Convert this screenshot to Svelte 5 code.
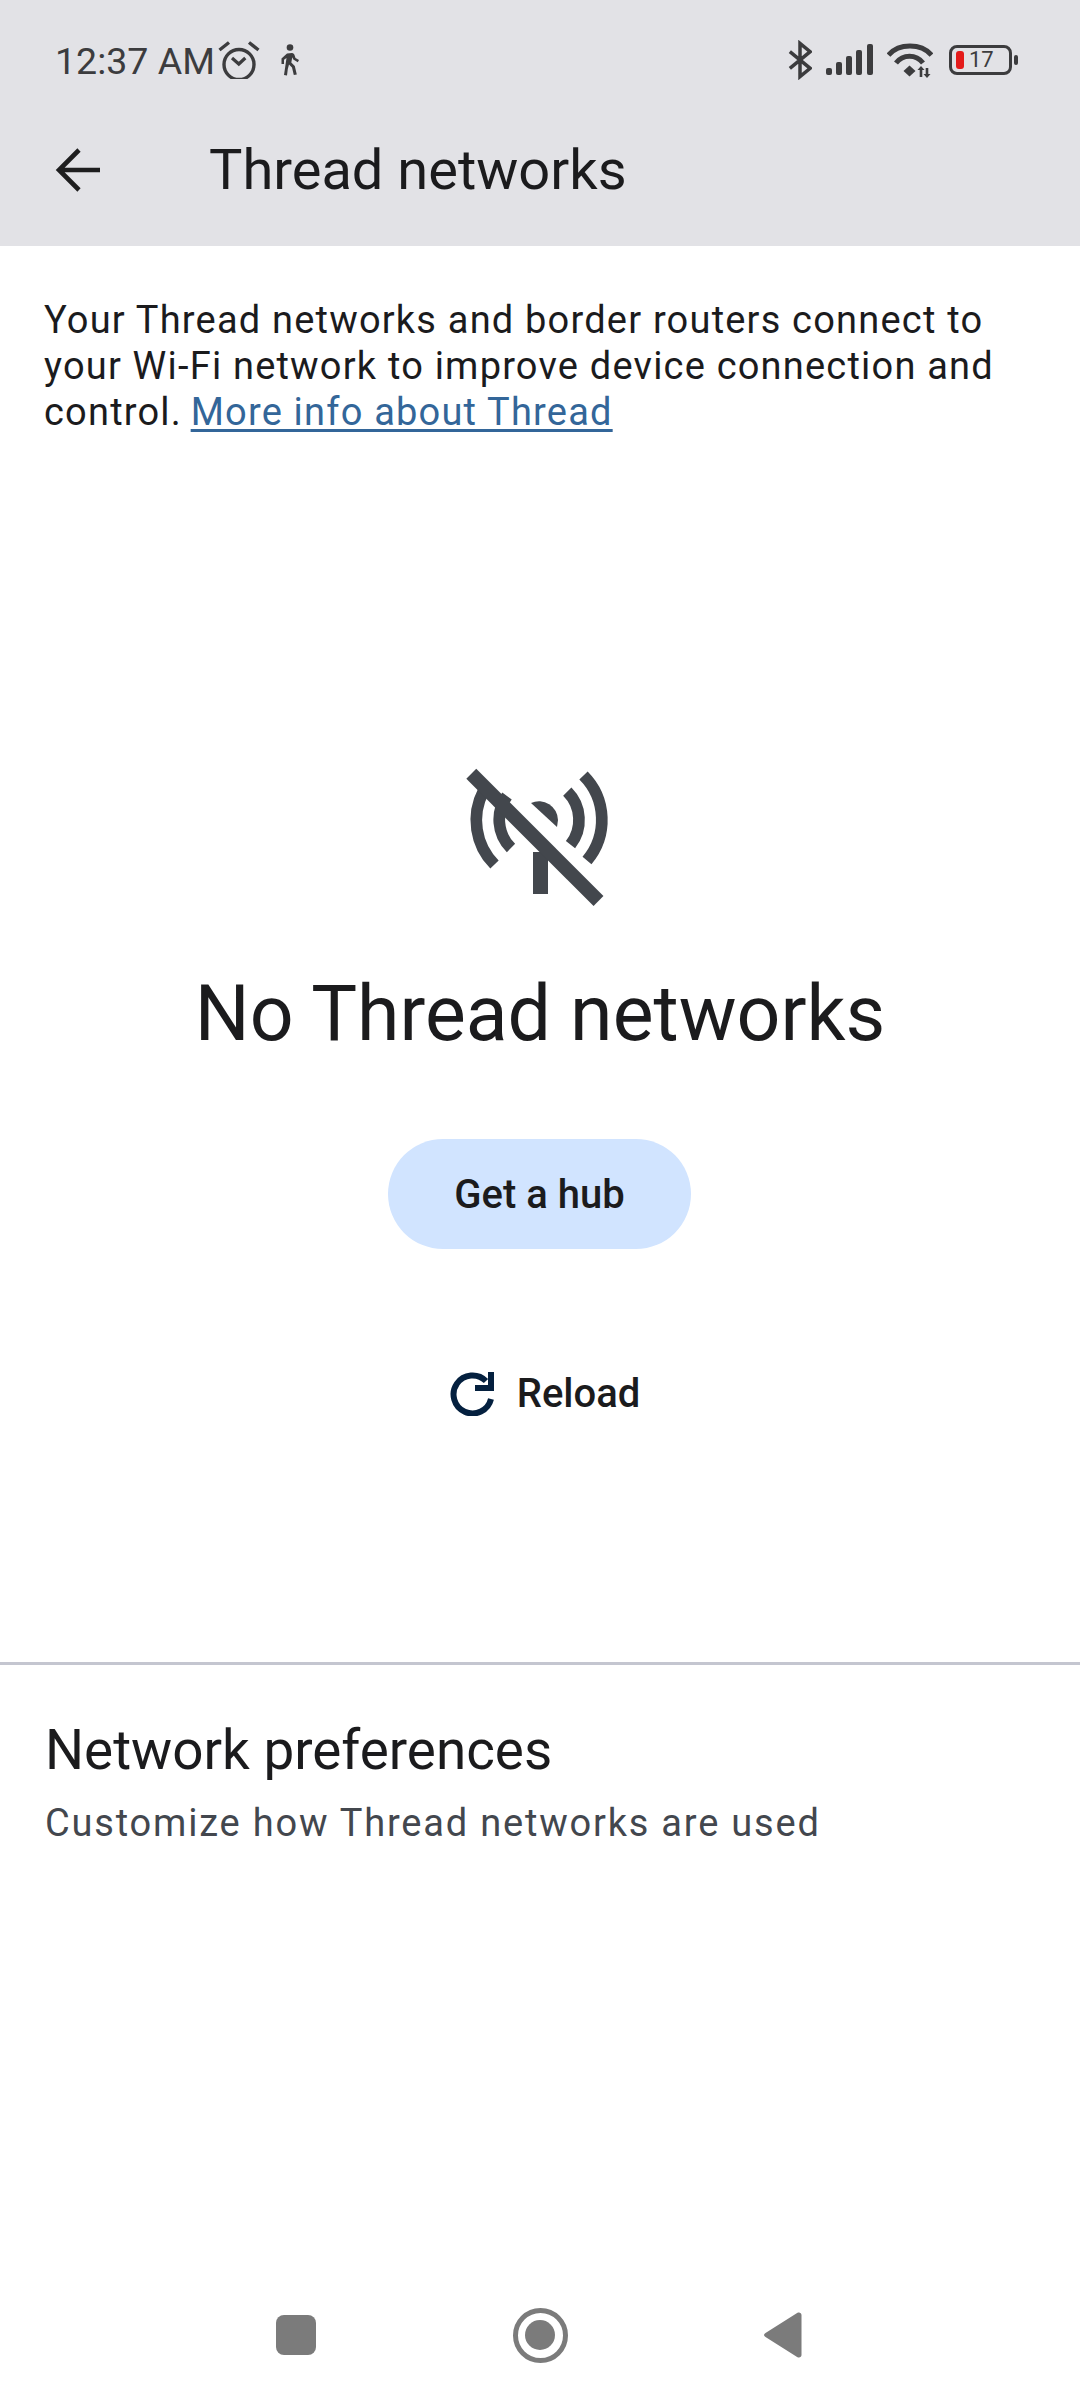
<script>
  const intro = 'Your Thread networks and border routers connect to your Wi-Fi network to improve device connection and control.';
</script>

<div class="page">
  <header class="appbar">
    <div class="status">
      <div class="status-left">
        <span class="time">12:37 AM</span>
        <svg class="alarm" width="42" height="38" viewBox="0 0 42 38" fill="none" stroke="#3c3c3e">
          <circle cx="21" cy="23.500" r="15" stroke-width="3.400" />
          <path d="M14 17 20.800 23l6.500-6" stroke-width="3.200" />
          <path d="M1.500 9 11 1.500M31 1.500 40.500 9" stroke-width="3.400" />
        </svg>
        <svg class="walk" width="20" height="32" viewBox="0 0 20 32" fill="#3c3c3e">
          <circle cx="10" cy="3.500" r="3.300" />
          <path d="M7 9.500 12 9c1.500 0 2 1 2.500 2l1 3 3.500 2-1.200 2.200-4.500-2.600-1-2.400-1 5.200 3.500 3.600 2 8.500-3 .5-1.800-7.500-3-3-1.200 4.500-.8 6.500-3-.5 1.200-8L6.500 14 4 15.800V20H1.500v-5.500z" />
        </svg>
      </div>
      <div class="status-right">
        <svg width="24" height="40" viewBox="0 0 26 40" fill="none" stroke="#3c3c3e" stroke-width="3.800">
          <path d="M2 11 24 29 13 38V2l11 9L2 29" />
        </svg>
        <svg class="signal" width="48" height="32" viewBox="0 0 48 32" fill="#3c3c3e">
          <rect x="0" y="24" width="6" height="7" rx="2" />
          <rect x="10" y="18" width="6" height="13" rx="2" />
          <rect x="20" y="12" width="6" height="19" rx="2" />
          <rect x="30" y="6" width="6" height="25" rx="2" />
          <rect x="41" y="0" width="6" height="31" rx="2" />
        </svg>
        <svg class="wifi" width="46" height="36" viewBox="0 0 46 36" fill="none" stroke="#3c3c3e" stroke-width="5">
          <path d="M1.500 13C12 1 34 1 44.500 13M9 21C16 12 29 12 36 21" />
          <path d="M16.500 29l6-5.500 6 5.500-6 5.500z" fill="#3c3c3e" stroke="none" />
          <path d="M34 27v8M40 26v8" stroke-width="2.600" />
          <path d="M34 24l-3.500 4h7zM40 36l3.500-4h-7z" fill="#3c3c3e" stroke="none" />
        </svg>
        <div class="battery">
          <div class="cell">
            <span class="level"></span>
            <span class="pct">17</span>
          </div>
          <span class="nub"></span>
        </div>
      </div>
    </div>
    <div class="toolbar">
      <svg class="back" width="46" height="44" viewBox="0 0 46 44" fill="none" stroke="#1e1e1f" stroke-width="4.600">
        <path d="M45 22H4M24 2 4 22l20 20" />
      </svg>
      <h1>Thread networks</h1>
    </div>
  </header>

  <main>
    <p class="intro">{intro} <a href="#thread">More info about Thread</a></p>

    <section class="empty">
      <svg class="no-signal" width="144" height="144" viewBox="0 0 144 144" fill="none">
        <g stroke="#43474d" stroke-width="11.700">
          <path d="M17.500 24A63 63 0 0 0 28.500 97.500" />
          <path d="M41 29A40 40 0 0 0 45 81" />
          <path d="M117.500 8.500A63 63 0 0 1 121 93.500" />
          <path d="M101.300 24.700A40 40 0 0 1 104.500 77.600" />
        </g>
        <path d="M65 36A19 19 0 0 1 92 53L91 60z" fill="#43474d" />
        <rect x="67" y="85" width="15" height="42" fill="#43474d" />
        <path d="M5.300 6.800 132.500 134" stroke="#43474d" stroke-width="14" />
      </svg>

      <h2>No Thread networks</h2>

      <button class="hub" type="button">Get a hub</button>

      <button class="reload" type="button">
        <svg width="44" height="44" viewBox="0 0 44 44" fill="none" stroke="#04203f" stroke-width="6">
          <path d="M41 27A19 19 0 1 1 36 9" />
          <path d="M41 0v16H25" />
        </svg>
        Reload
      </button>
    </section>

    <section class="prefs">
      <h3>Network preferences</h3>
      <p>Customize how Thread networks are used</p>
    </section>
  </main>

  <nav class="nav">
    <span class="square"></span>
    <span class="home"><span></span></span>
    <svg width="38" height="46" viewBox="0 0 38 46" fill="#7b7b7b">
      <path d="M33.500.8c2-1 4 .2 4 2.200v40c0 2-2 3.200-4 2.200L1.500 25c-2-1.200-2-2.800 0-4z" />
    </svg>
  </nav>
</div>

<style>
  :global(body) {
    margin: 0;
    background: #fff;
  }

  .page {
    width: 1080px;
    height: 2400px;
    display: flex;
    flex-direction: column;
    font-family: Roboto, sans-serif;
    color: #1b1b1d;
    overflow: hidden;
  }

  .appbar {
    height: 246px;
    flex: none;
    background: #e2e2e6;
  }

  .status {
    height: 120px;
    box-sizing: border-box;
    padding: 0 62px 0 55px;
    display: flex;
    justify-content: space-between;
    align-items: center;
  }

  .status-left,
  .status-right {
    display: flex;
    align-items: center;
  }

  .time {
    font-size: 37.5px;
    color: #3c3c3e;
    margin-top: 2px;
  }

  .alarm { margin-left: 3px; }
  .walk { margin-left: 20px; }

  .signal { margin-left: 14px; }
  .wifi { margin-left: 13px; }

  .battery {
    margin-left: 16px;
    display: flex;
    align-items: center;
    gap: 2px;
  }

  .cell {
    width: 63px;
    height: 30px;
    box-sizing: border-box;
    border: 3px solid #3c3c3e;
    border-radius: 8px;
    display: flex;
    align-items: center;
    padding-left: 4px;
    gap: 5px;
  }

  .level {
    width: 8px;
    height: 18px;
    border-radius: 3px;
    background: #e41b1b;
  }

  .pct {
    font-size: 22px;
    line-height: 24px;
    color: #3c3c3e;
  }

  .nub {
    width: 4px;
    height: 10px;
    border-radius: 2px;
    background: #3c3c3e;
  }

  .toolbar {
    height: 100px;
    padding-left: 55px;
    display: flex;
    align-items: center;
  }

  .back { flex: none; }

  h1 {
    margin: 0 0 0 108px;
    font-size: 56px;
    font-weight: 400;
  }

  main {
    flex: 1;
    display: flex;
    flex-direction: column;
  }

  .intro {
    margin: 0;
    padding: 51px 44px 0;
    font-size: 38px;
    line-height: 46px;
    letter-spacing: 1.2px;
  }

  .intro a {
    margin-left: -2px;
    color: #336699;
    text-decoration-thickness: 3px;
    text-underline-offset: 4px;
  }

  .empty {
    display: flex;
    flex-direction: column;
    align-items: center;
    padding-top: 332px;
    height: 1227px;
    box-sizing: border-box;
  }

  .no-signal { margin-left: -4px; }

  h2 {
    margin: 58px 0 0;
    font-size: 77px;
    font-weight: 400;
    line-height: 90px;
  }

  button {
    font-family: inherit;
    border: 0;
    background: none;
    color: inherit;
  }

  .hub {
    margin: 80px 1px 0 0;
    width: 303px;
    height: 110px;
    border-radius: 55px;
    background: #d1e4ff;
    font-size: 40px;
    font-weight: 500;
    padding: 0;
  }

  .reload {
    margin: 121px 0 0 10px;
    padding: 0;
    display: flex;
    align-items: center;
    gap: 23px;
    font-size: 40px;
    font-weight: 500;
  }

  .prefs {
    border-top: 3px solid #c4c6d0;
    padding: 55px 45px 0;
  }

  h3 {
    margin: 0;
    font-size: 54.8px;
    font-weight: 400;
    line-height: 60px;
  }

  .prefs p {
    margin: 20px 0 0;
    font-size: 38px;
    line-height: 46px;
    letter-spacing: 1.8px;
    color: #43474e;
  }

  .nav {
    height: 90px;
    flex: none;
    margin-bottom: 20px;
    box-sizing: border-box;
    display: flex;
    align-items: center;
    padding: 0 278px 0 276px;
    justify-content: space-between;
  }

  .square {
    width: 40px;
    height: 40px;
    border-radius: 8px;
    background: #7b7b7b;
  }

  .home {
    width: 55px;
    height: 55px;
    box-sizing: border-box;
    border: 5px solid #7b7b7b;
    border-radius: 50%;
    display: flex;
    align-items: center;
    justify-content: center;
  }

  .home span {
    width: 30px;
    height: 30px;
    border-radius: 50%;
    background: #7b7b7b;
  }
</style>
